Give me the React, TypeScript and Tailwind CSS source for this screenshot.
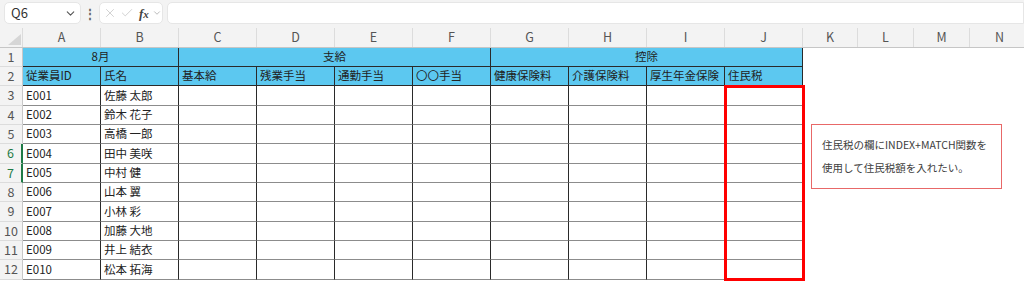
import React from "react";
import { ChevronDown, X, Check } from "lucide-react";

const COLS: { k: string; w: number }[] = [
  { k: "A", w: 78 },
  { k: "B", w: 78 },
  { k: "C", w: 78 },
  { k: "D", w: 78 },
  { k: "E", w: 78 },
  { k: "F", w: 78 },
  { k: "G", w: 78 },
  { k: "H", w: 78 },
  { k: "I", w: 78 },
  { k: "J", w: 78 },
  { k: "K", w: 55 },
  { k: "L", w: 56 },
  { k: "M", w: 56 },
  { k: "N", w: 60 },
];

const ROWH = [19, 19, 20, 19, 19, 20, 19, 19, 20, 19, 19, 20];

const HEAD2 = [
  "従業員ID",
  "氏名",
  "基本給",
  "残業手当",
  "通勤手当",
  "〇〇手当",
  "健康保険料",
  "介護保険料",
  "厚生年金保険",
  "住民税",
];

const DATA: [string, string][] = [
  ["E001", "佐藤 太郎"],
  ["E002", "鈴木 花子"],
  ["E003", "高橋 一郎"],
  ["E004", "田中 美咲"],
  ["E005", "中村 健"],
  ["E006", "山本 翼"],
  ["E007", "小林 彩"],
  ["E008", "加藤 大地"],
  ["E009", "井上 結衣"],
  ["E010", "松本 拓海"],
];

const FONT = {
  fontFamily: '"Noto Sans CJK JP", "Noto Sans", sans-serif',
};

function RowHeader({ n, h }: { n: number; h: number }) {
  const sel = n === 6 || n === 7;
  return (
    <div
      className={`w-[23px] shrink-0 flex items-center justify-center bg-[#f3f3f3] border-b border-[#dcdcdc] text-[12.5px] ${
        sel ? "text-[#1e7a45] border-r-2 border-r-[#1e7a45]" : "text-[#555] border-r border-r-[#c8c8c8]"
      }`}
      style={{ height: h }}
    >
      {n}
    </div>
  );
}

function Blank({ w, h }: { w: number; h: number }) {
  return <div className="shrink-0 bg-white" style={{ width: w, height: h }} />;
}

export default function App() {
  return (
    <div className="w-[1024px] h-[281px] overflow-hidden bg-white relative" style={FONT}>
      {/* Formula bar */}
      <div className="h-[28px] bg-[#f3f3f3] flex items-start pt-[2px] pl-[4px] gap-0">
        <div className="w-[77px] h-[22px] bg-white rounded-[5px] border border-[#e6e6e6] flex items-center justify-between pl-[6px] pr-[3px] text-[13px] text-[#333]">
          <span>Q6</span>
          <ChevronDown size={13} strokeWidth={2} className="text-[#555]" />
        </div>
        <div className="w-[18px] h-[22px] flex items-center justify-center text-[#666] text-[12px] font-bold">⋮</div>
        <div className="w-[64px] h-[22px] bg-white rounded-[5px] border border-[#e6e6e6] flex items-center pl-[3px] gap-[3px]">
          <X size={14} strokeWidth={1.3} className="text-[#c4c4c4]" />
          <Check size={14} strokeWidth={1.3} className="text-[#c4c4c4]" />
          <span
            className="italic font-bold text-[13px] text-[#444] ml-[2px] leading-none"
            style={{ fontFamily: '"Liberation Serif", serif' }}
          >
            f<span className="text-[11px]">x</span>
          </span>
          <ChevronDown size={10} strokeWidth={1.6} className="text-[#999]" />
        </div>
        <div className="ml-[4px] flex-1 h-[22px] bg-white rounded-l-[5px] border border-[#e6e6e6]" />
      </div>

      {/* Column headers */}
      <div className="flex h-[20px] bg-[#f3f3f3] border-b border-[#c6c6c6]">
        <div className="w-[23px] shrink-0 relative border-r border-[#dcdcdc]">
          <svg width="13" height="11" viewBox="0 0 13 11" className="absolute left-[8px] top-[6px]">
            <polygon points="13,0 13,11 0,11" fill="#d6d6d6" />
          </svg>
        </div>
        {COLS.map((c) => (
          <div
            key={c.k}
            className="shrink-0 flex items-center justify-center text-[12.5px] text-[#555] border-r border-[#dcdcdc]"
            style={{ width: c.w }}
          >
            {c.k}
          </div>
        ))}
      </div>

      {/* Row 1 */}
      <div className="flex">
        <RowHeader n={1} h={ROWH[0]} />
        {[
          ["8月", 156],
          ["支給", 312],
          ["控除", 312],
        ].map(([t, w]) => (
          <div
            key={t as string}
            className="shrink-0 flex items-center justify-center bg-[#5cc8f0] border-r border-b border-[#2a2a2a] text-[11.5px] text-[#222]"
            style={{ width: w as number, height: ROWH[0] }}
          >
            {t}
          </div>
        ))}
        {COLS.slice(10).map((c) => (
          <Blank key={c.k} w={c.w} h={ROWH[0]} />
        ))}
      </div>

      {/* Row 2 */}
      <div className="flex">
        <RowHeader n={2} h={ROWH[1]} />
        {HEAD2.map((t) => (
          <div
            key={t}
            className="shrink-0 flex items-center pl-[3px] bg-[#5cc8f0] border-r border-b border-[#2a2a2a] text-[11.5px] text-[#222] whitespace-nowrap overflow-hidden"
            style={{ width: 78, height: ROWH[1] }}
          >
            {t}
          </div>
        ))}
        {COLS.slice(10).map((c) => (
          <Blank key={c.k} w={c.w} h={ROWH[1]} />
        ))}
      </div>

      {/* Data rows */}
      {DATA.map(([id, name], i) => {
        const h = ROWH[i + 2];
        return (
          <div key={id} className="flex">
            <RowHeader n={i + 3} h={h} />
            {COLS.slice(0, 10).map((c, j) => (
              <div
                key={c.k}
                className="shrink-0 flex items-center pl-[3px] bg-white border-r border-r-[#2a2a2a] border-b border-b-[#8c8c8c] text-[11.5px] text-[#222] whitespace-nowrap"
                style={{ width: c.w, height: h }}
              >
                {j === 0 ? id : j === 1 ? name : ""}
              </div>
            ))}
            {COLS.slice(10).map((c) => (
              <Blank key={c.k} w={c.w} h={h} />
            ))}
          </div>
        );
      })}

      {/* Red highlight around J3:J12 */}
      <div className="absolute left-[724px] top-[85px] w-[81px] h-[196px] border-[3px] border-[#ff0000] pointer-events-none" />

      {/* Note text box */}
      <div className="absolute left-[811px] top-[124px] w-[191px] h-[65px] bg-white border border-[#e86868] pl-[10px] pt-[8px] text-[10.5px] leading-[23px] text-[#404040] whitespace-nowrap">
        住民税の欄にINDEX+MATCH関数を
        <br />
        使用して住民税額を入れたい。
      </div>
    </div>
  );
}
